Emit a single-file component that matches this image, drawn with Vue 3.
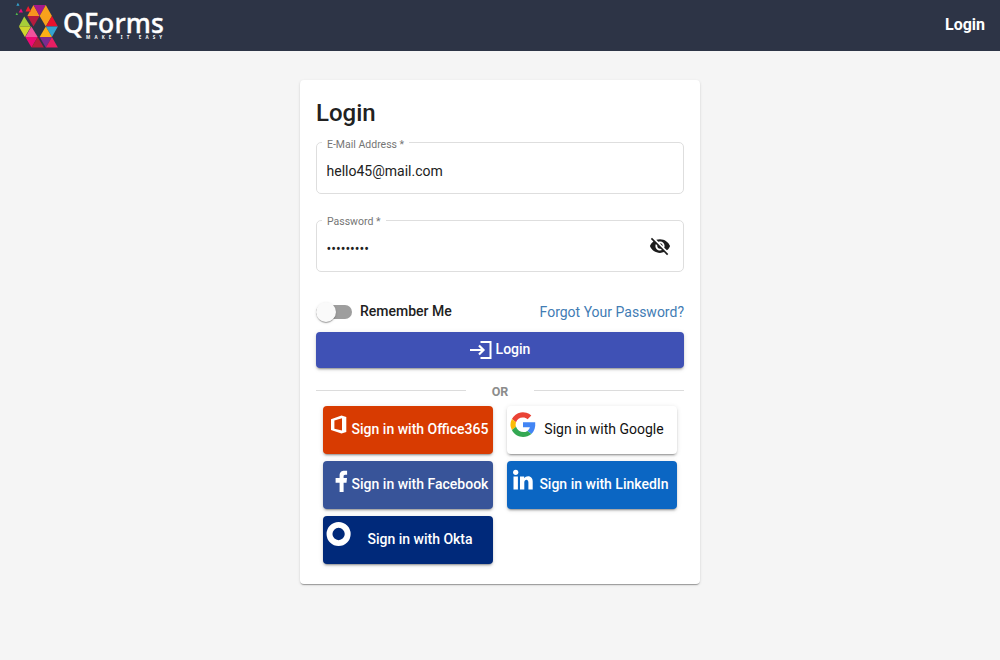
<script setup>
import { ref } from 'vue'

const email = ref('hello45@mail.com')
const password = ref('secret123')

const triangles = [
  { p: '24,5 17.7,16 30.3,16', c: '#f7931e' },
  { p: '24,5 36.6,5 30.3,16', c: '#a3198b' },
  { p: '36.6,5 30.3,16 42.9,16', c: '#f9a11b' },
  { p: '17.7,16 30.3,16 24,26.5', c: '#b51c3e' },
  { p: '14.5,16.5 21,26.5 9,26.5', c: '#a6ce39' },
  { p: '30.3,16 42.9,16 36.6,26.5', c: '#f7a11b' },
  { p: '42.9,16 49,26.5 36.6,26.5', c: '#e8112d' },
  { p: '9,26.5 21.4,26.5 15.2,37', c: '#cfd62b' },
  { p: '21.8,26.5 28.3,37 15.6,37', c: '#f0529c' },
  { p: '36.6,26.5 49,26.5 42.9,37', c: '#34a3cf' },
  { p: '36.6,26.5 42.9,37 30.3,37', c: '#fbb016' },
  { p: '15.6,37 28.3,37 22,47.5', c: '#ed0973' },
  { p: '28.3,37 34.6,47.5 22,47.5', c: '#b71f3d' },
  { p: '30.3,37 42.9,37 36.6,47.5', c: '#7b2b90' },
  { p: '42.9,37 49,47.5 36.6,47.5', c: '#e81f63' },
  { p: '18.5,6 21.5,11.5 15.8,11.5', c: '#ee1c2e' },
  { p: '11.2,8.5 13.2,12.5 8.8,12.5', c: '#ec087a' },
  { p: '8,2.8 9.6,5.8 6.4,5.8', c: '#34a3cf' },
  { p: '6.8,12.5 8.2,15 5.6,15', c: '#52b84a' }
]
</script>

<template>
  <div class="page">
    <header class="bar">
      <div class="brand">
        <svg class="mark" width="52" height="51" viewBox="0 0 52 51">
          <g transform="translate(2.1 0) scale(.975 1)">
            <polygon v-for="t in triangles" :key="t.p" :points="t.p" :fill="t.c" />
          </g>
        </svg>
        <div class="words"><span class="name">QForms</span><span class="tag">MAKE IT EASY</span></div>
      </div>
      <a class="nav-login">Login</a>
    </header>

    <main class="card">
      <h1>Login</h1>
      <fieldset class="field first">
        <legend><span>E-Mail Address *</span></legend>
        <input v-model="email" type="text" />
      </fieldset>
      <fieldset class="field second">
        <legend><span>Password *</span></legend>
        <input v-model="password" type="password" />
        <svg class="eye" width="22" height="22" viewBox="0 0 24 24">
          <path d="M12 7c2.76 0 5 2.24 5 5 0 .65-.13 1.26-.36 1.83l2.92 2.92c1.51-1.26 2.7-2.89 3.43-4.75-1.73-4.39-6-7.5-11-7.5-1.4 0-2.74.25-3.98.7l2.16 2.16C10.74 7.13 11.35 7 12 7zM2 4.27l2.28 2.28.46.46C3.08 8.3 1.78 10.02 1 12c1.73 4.39 6 7.5 11 7.5 1.55 0 3.03-.3 4.38-.84l.42.42L19.73 22 21 20.73 3.27 3 2 4.27zM7.53 9.8l1.55 1.55c-.05.21-.08.43-.08.65 0 1.66 1.34 3 3 3 .22 0 .44-.03.65-.08l1.55 1.55c-.67.33-1.41.53-2.2.53-2.76 0-5-2.24-5-5 0-.79.2-1.53.53-2.2zm4.31-.78l3.15 3.15.02-.16c0-1.66-1.34-3-3-3l-.17.01z" />
        </svg>
      </fieldset>

      <div class="options">
        <label class="remember"><span class="track"><span class="thumb"></span></span><span class="label">Remember Me</span></label>
        <a class="forgot">Forgot Your Password?</a>
      </div>

      <button class="submit">
        <svg width="22" height="20" viewBox="0 0 22 20" fill="none" stroke="#fff" stroke-width="2">
          <path d="M10.5 2H20.5V18H10.5" />
          <path d="M0 10H13.5M9 5.5l4.5 4.5-4.5 4.5" stroke-width="2.2" />
        </svg>
        <span>Login</span>
      </button>

      <div class="or"><span>OR</span></div>

      <div class="social">
        <button class="office">
          <svg width="32" height="32" viewBox="0 0 32 32">
            <path fill="#fff" fill-rule="evenodd" d="M8 10.2L18.5 6.4 23.3 8V23L18.5 24.6 8 21ZM11.4 11.4V19.8L19 21.6V9.3Z" />
          </svg>
          <span>Sign in with Office365</span>
        </button>
        <button class="google">
          <svg width="32" height="32" viewBox="0 0 32 32">
            <path fill="#ea4335" d="M16 8.4c1.8 0 3.4.6 4.6 1.8l3.7-3.6A12.4 12.4 0 0 0 4.9 10L9 13.3a7.3 7.3 0 0 1 7-4.9Z" />
            <path fill="#fbbc05" d="M9 13.2l-4.1-3.3a12.5 12.5 0 0 0 0 11.2L9 17.8a7.4 7.4 0 0 1 0-4.6Z" />
            <path fill="#4285f4" d="M28.2 13.2H16v5h6.9a6 6 0 0 1-2.5 3.7l4 3.2c2.9-2.7 4.3-6.8 3.8-11.9Z" />
            <path fill="#34a853" d="M24.4 25.1l-4-3.2c-3.8 2.6-9.6.9-11.4-4.1l-4.1 3.3c3.7 7.6 13.3 9.1 19.5 4Z" />
          </svg>
          <span>Sign in with Google</span>
        </button>
        <button class="facebook">
          <svg width="32" height="32" viewBox="0 0 32 32">
            <path fill="#fff" d="M16.6 28V18.7H12.6V14H16.6V11.5C16.6 8.2 18.8 6.8 21.4 6.8H24.1V10.8H22.3C21 10.8 20.6 11.5 20.6 12.6V14H24L23.5 18.7H20.6V28Z" />
          </svg>
          <span>Sign in with Facebook</span>
        </button>
        <button class="linkedin">
          <svg width="32" height="32" viewBox="0 0 32 32">
            <g fill="#fff"><circle cx="8.7" cy="8.3" r="2.6" /><path d="M6.5 12.4H10.9V25.6H6.5ZM13 12.4H17.2V14.2C19 11 25.7 11.2 25.7 17.4V25.6H21.4V18.4C21.4 14.6 17.3 14.9 17.3 18.4V25.6H13Z" /></g>
          </svg>
          <span>Sign in with LinkedIn</span>
        </button>
        <button class="okta">
          <svg width="32" height="32" viewBox="0 0 32 32">
            <circle cx="15.6" cy="15" r="9.1" fill="none" stroke="#fff" stroke-width="5.9" />
          </svg>
          <span>Sign in with Okta</span>
        </button>
      </div>
    </main>
  </div>
</template>

<style>
body {
  background: #f5f5f5;
}
</style>

<style scoped>
* {
  box-sizing: border-box;
}
.page {
  min-height: 660px;
  overflow: hidden;
  font-family: Roboto, sans-serif;
  color: #212121;
}
.bar {
  height: 51px;
  background: #2d3446;
  display: flex;
  justify-content: space-between;
  padding: 0 15px 0 8px;
}
.brand {
  display: flex;
  color: #fff;
}
.mark {
  flex: none;
}
.words {
  display: flex;
  flex-direction: column;
  margin-left: 3px;
  font-family: "Noto Sans", sans-serif;
}
.name {
  font-size: 26.5px;
  line-height: 26px;
  padding-top: 10px;
  font-weight: 500;
  letter-spacing: 0.15px;
  -webkit-text-stroke: 0.35px #fff;
}
.tag {
  font: 700 4.5px/5px "Noto Sans", sans-serif;
  letter-spacing: 4.15px;
  padding-left: 23px;
  margin-top: -1px;
  white-space: nowrap;
}
.nav-login {
  font-size: 16px;
  font-weight: 700;
  line-height: 49px;
  color: #fff;
}
.card {
  width: 400px;
  height: 504px;
  margin: 29px auto 0;
  padding: 16px;
  background: #fff;
  border-radius: 4px;
  box-shadow: 0 2px 1px -1px rgba(0, 0, 0, .2), 0 1px 1px rgba(0, 0, 0, .14), 0 1px 3px rgba(0, 0, 0, .12);
}
h1 {
  margin: 0;
  font-size: 24px;
  line-height: 34px;
  font-weight: 500;
}
.field {
  position: relative;
  height: 58px;
  margin: 6px 0 0;
  padding: 0 10px;
  border: 1px solid #dedede;
  border-radius: 5px;
  min-width: 0;
}
.second {
  margin-top: 20px;
}
legend {
  margin-left: -5px;
  padding: 0 5px;
  height: 13px;
  font-size: 10.5px;
  line-height: 13px;
  color: #757575;
}
legend span {
  display: block;
  padding-top: 1px;
}
.first legend span {
  padding-top: 2px;
}
input {
  display: block;
  width: 290px;
  height: 18px;
  margin-top: 13px;
  margin-left: -0.5px;
  padding: 0;
  border: 0;
  outline: 0;
  background: none;
  font: 14px/18px Roboto, sans-serif;
  color: #212121;
}
.eye {
  position: absolute;
  right: 12px;
  top: 8px;
  fill: #1c1c1c;
}
.options {
  height: 24px;
  margin-top: 28px;
  display: flex;
  justify-content: space-between;
  align-items: center;
  font-size: 14px;
}
.remember {
  display: flex;
  align-items: center;
  font-weight: 500;
}
.label {
  padding-bottom: 2px;
}
.track {
  width: 36px;
  height: 14px;
  border-radius: 7px;
  background: #9e9e9e;
  margin-right: 8px;
  display: flex;
  align-items: center;
}
.thumb {
  width: 20px;
  height: 20px;
  flex: none;
  border-radius: 50%;
  background: #fafafa;
  box-shadow: 0 2px 1px -1px rgba(0, 0, 0, .2), 0 1px 1px rgba(0, 0, 0, .14), 0 1px 3px rgba(0, 0, 0, .12);
}
.forgot {
  color: #427cb4;
}
button {
  border: 0;
  border-radius: 4px;
  color: #fff;
  font: 500 14px/36px Roboto, sans-serif;
  box-shadow: 0 3px 1px -2px rgba(0, 0, 0, .2), 0 2px 2px rgba(0, 0, 0, .14), 0 1px 5px rgba(0, 0, 0, .12);
}
.submit {
  width: 100%;
  height: 36px;
  margin-top: 8px;
  padding: 0;
  display: flex;
  justify-content: center;
  align-items: center;
  gap: 4px;
  background: #3f51b5;
}
.submit span {
  line-height: 34px;
  padding-bottom: 2px;
}
.or {
  display: flex;
  align-items: center;
  height: 16px;
  margin-top: 14px;
  font-size: 12.5px;
  font-weight: 700;
  color: #8c8c8c;
}
.or span {
  width: 68px;
  text-align: center;
  padding-top: 2px;
}
.or::before,
.or::after {
  content: "";
  flex: 1;
  height: 1px;
  background: #dcdcdc;
}
.social {
  display: grid;
  grid-template-columns: 170px 170px;
  gap: 7px 14px;
  padding: 8px 7px 0;
}
.social button {
  height: 48px;
  padding: 0 8px 0 0;
  display: flex;
  align-items: flex-start;
}
.social svg {
  width: 32px;
  height: 32px;
  flex: none;
  margin-top: 3px;
}
.social span {
  line-height: 46px;
  flex: 1 1 0;
  min-width: 0;
  display: flex;
  justify-content: center;
  white-space: nowrap;
}
.social .office,
.social .facebook {
  padding-right: 4px;
}
.social .office span,
.social .facebook span {
  margin-left: -4px;
}
.office { background: #d83b01; }
.social .google { background: #fff; color: #111; font-weight: 400; }
.facebook { background: #385499; }
.linkedin { background: #0b66c3; }
.okta { background: #00297a; }
</style>
